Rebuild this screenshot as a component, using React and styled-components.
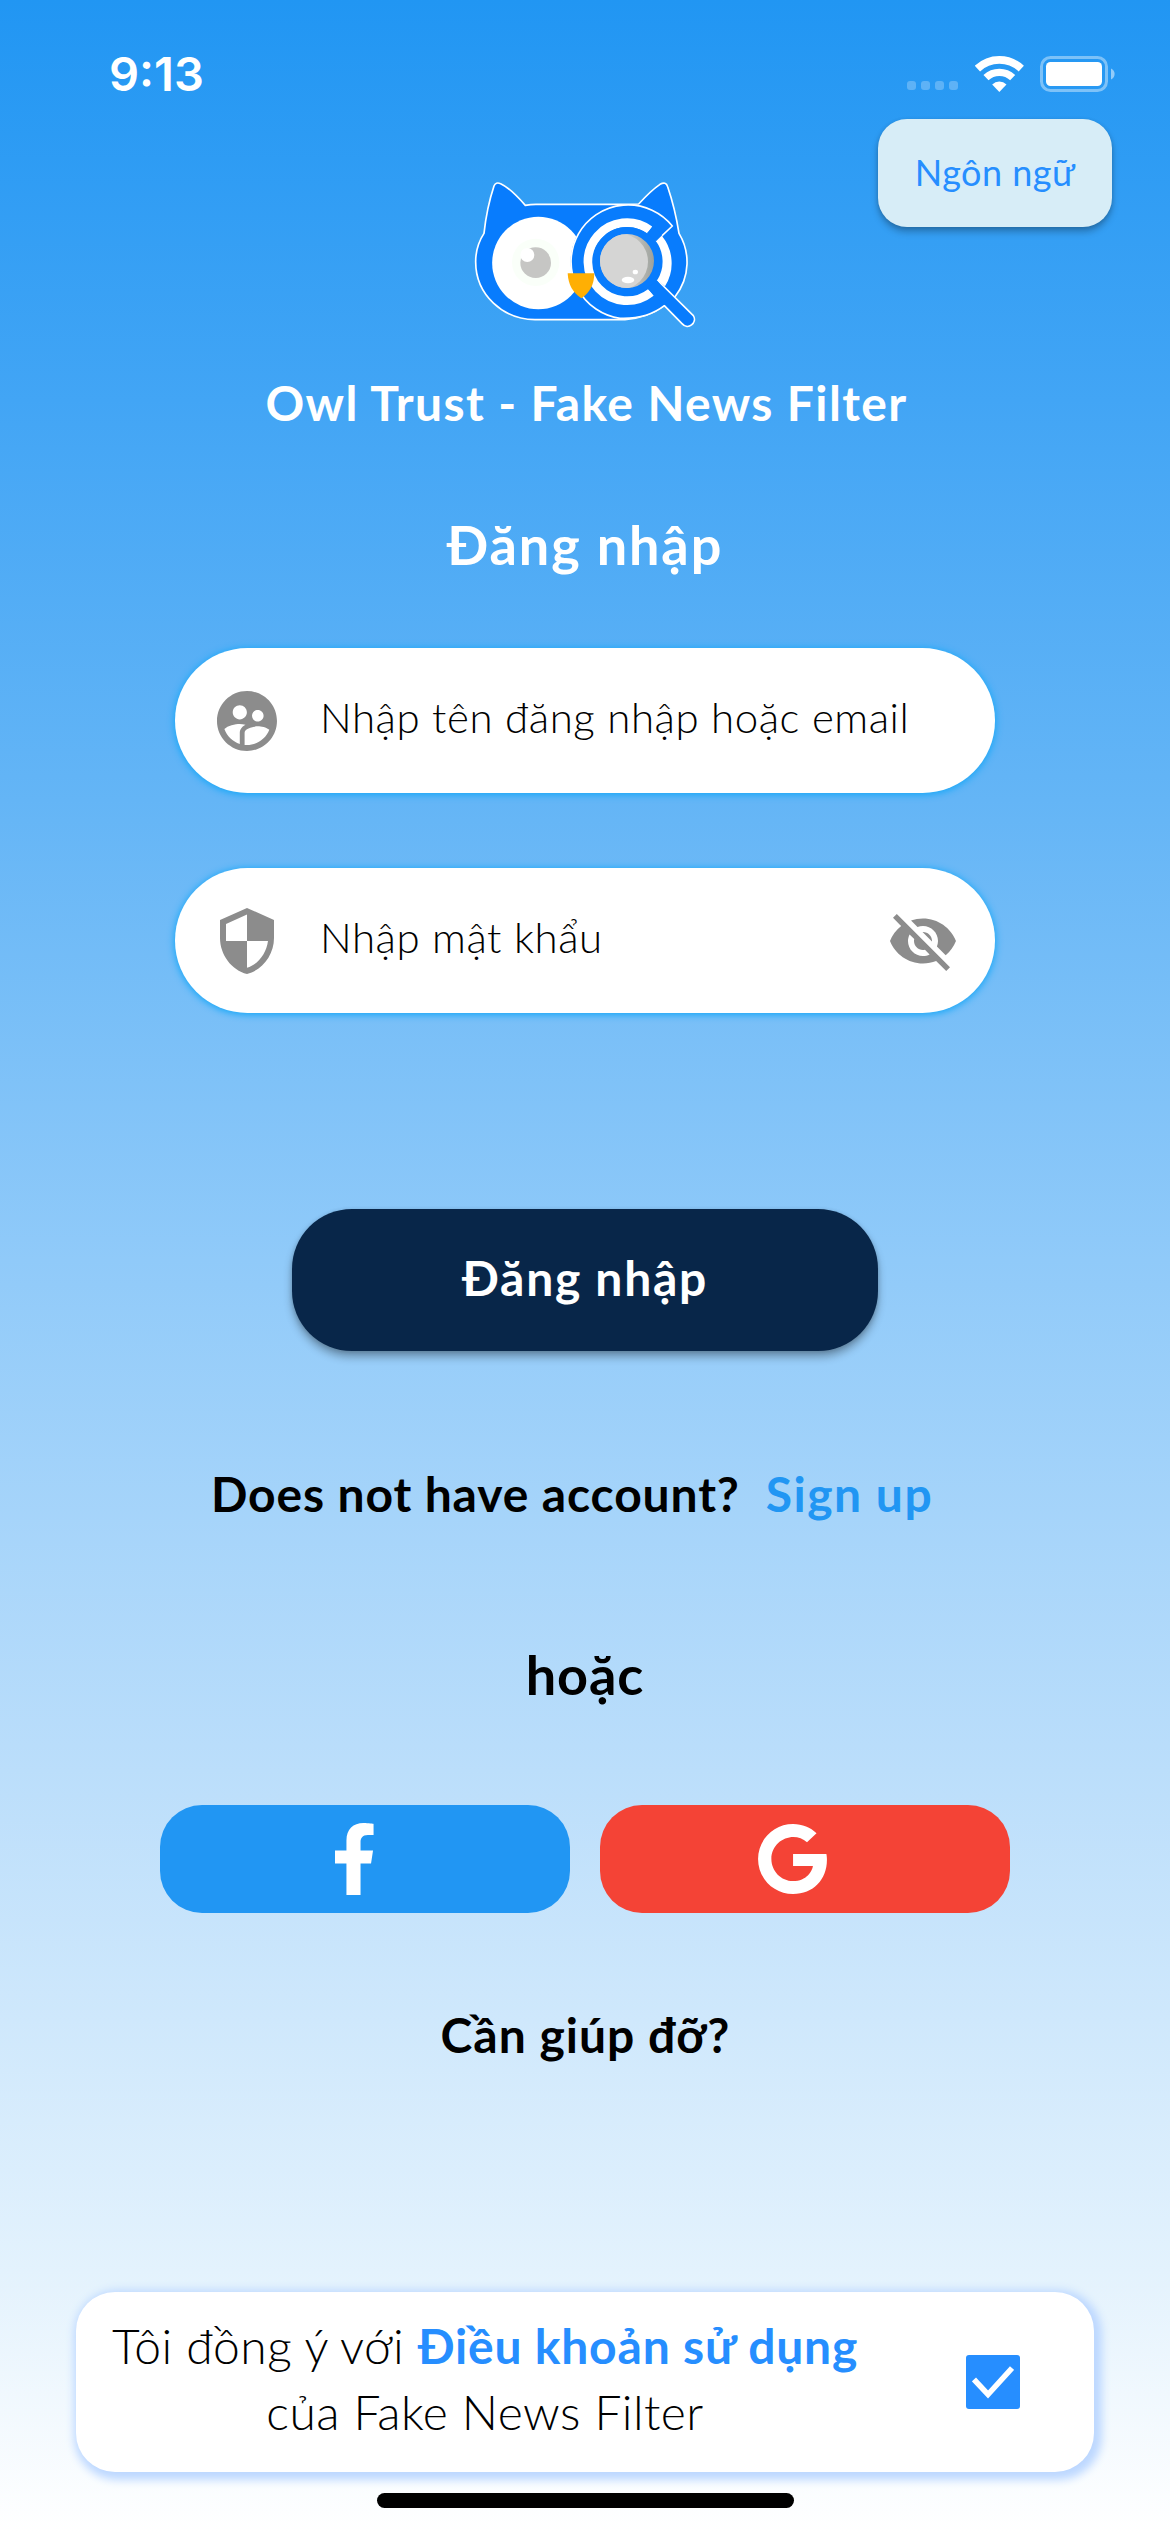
import React from "react";
import styled, { createGlobalStyle } from "styled-components";
import { MdSupervisedUserCircle, MdSecurity, MdVisibilityOff } from "react-icons/md";

const GlobalStyle = createGlobalStyle`
  * { box-sizing: border-box; }
  body { margin: 0; }
  button { border: 0; padding: 0; font: inherit; }
`;

const Screen = styled.main`
  display: flex;
  flex-direction: column;
  width: 1170px;
  height: 2532px;
  overflow: hidden;
  font-family: Lato, "Noto Sans", sans-serif;
  color: #000;
  background: linear-gradient(
    to bottom,
    #2196f3,
    #42a5f5 400px,
    #64b5f6 800px,
    #90caf9 1260px,
    #bbdefb 1770px,
    #e3f2fd 2270px,
    #fff
  );
`;

const StatusBar = styled.header`
  display: flex;
  align-items: center;
  justify-content: space-between;
  height: 119px;
  padding: 28px 54px 0 109px;
`;

const Clock = styled.time`
  font: 600 47px/60px Inter, "Liberation Sans", sans-serif;
  color: #fff;
`;

const Indicators = styled.div`
  display: flex;
  align-items: center;
`;

const SignalDots = styled.div`
  display: flex;
  gap: 5px;
  margin: 24px 17px 0 0;
`;

const Dot = styled.i`
  width: 9px;
  height: 9px;
  border-radius: 3px;
  background: rgba(255, 255, 255, 0.25);
`;

const Header = styled.section`
  display: grid;
  grid-template-columns: 1fr 250px 1fr;
  align-items: start;
  height: 254px;
`;

const LogoBox = styled.div`
  grid-column: 2;
  height: 170px;
  margin-top: 51px;
`;

const LanguageButton = styled.button`
  grid-column: 3;
  justify-self: end;
  width: 234px;
  height: 108px;
  margin-right: 58px;
  padding-bottom: 2px;
  border-radius: 29px;
  font-size: 36px;
  letter-spacing: 0.46px;
  color: #268eff;
  background: #d7edf7;
  box-shadow: 0 5px 7px rgba(0, 0, 0, 0.25), 0 1px 4px rgba(0, 0, 0, 0.12);
`;

const Title = styled.h1`
  margin: 0 0 0 3px;
  text-align: center;
  font-size: 48px;
  font-weight: 700;
  line-height: 60px;
  letter-spacing: 1.38px;
  color: #fff;
`;

const Heading = styled.h2`
  margin: 77px 0 0;
  text-align: center;
  font-size: 54px;
  font-weight: 700;
  line-height: 70px;
  letter-spacing: 1.9px;
  color: #fff;
`;

const Form = styled.div`
  display: flex;
  flex-direction: column;
  gap: 75px;
  margin: 68px 175px 0;
`;

const Field = styled.label`
  display: flex;
  align-items: center;
  height: 145px;
  padding: 0 36px;
  border-radius: 73px;
  background: #fff;
  box-shadow: 0 1px 7px 1px #18a8f8;
  color: #8c8c8c;
`;

const Placeholder = styled.span`
  flex: 1;
  padding: 0 0 7px 37px;
  font-size: 42px;
  font-weight: 300;
  letter-spacing: 0.55px;
  color: #000;
`;

const LoginButton = styled.button`
  align-self: center;
  width: 586px;
  height: 142px;
  margin-top: 196px;
  padding-bottom: 5px;
  border-radius: 60px;
  font-size: 48px;
  font-weight: 700;
  letter-spacing: 1.7px;
  color: #fff;
  background: #082649;
  box-shadow: 0 6px 8px rgba(0, 0, 0, 0.3), 0 1px 4px rgba(0, 0, 0, 0.15);
`;

const SignUpRow = styled.p`
  display: flex;
  gap: 26px;
  margin: 113px 0 0 211px;
  font-size: 48px;
  font-weight: 700;
  line-height: 60px;
  letter-spacing: 0.87px;
`;

const SignUpLink = styled.a`
  letter-spacing: 1.5px;
  color: #2196f3;
`;

const Divider = styled.p`
  margin: 116px 0 0;
  text-align: center;
  font-size: 54px;
  font-weight: 700;
  line-height: 70px;
  letter-spacing: 0.9px;
`;

const SocialRow = styled.div`
  display: grid;
  grid-template-columns: 1fr 1fr;
  gap: 30px;
  margin: 95px 160px 0;
`;

const SocialButton = styled.button`
  display: flex;
  align-items: center;
  justify-content: center;
  height: 108px;
  padding-right: ${(p) => p.$nudge || 0}px;
  border-radius: 42px;
  color: #fff;
  background: ${(p) => p.$color};
`;

const HelpLink = styled.p`
  margin: 92px 0 0 1px;
  text-align: center;
  font-size: 48px;
  font-weight: 700;
  line-height: 60px;
  letter-spacing: 1px;
`;

const TermsCard = styled.section`
  display: flex;
  align-items: center;
  height: 180px;
  margin: 227px 76px 0;
  padding: 0 74px 0 34px;
  border-radius: 39px;
  background: #fff;
  box-shadow: 3px 3px 8px 5px #bdd8ff;
`;

const TermsText = styled.p`
  width: 750px;
  margin: 0;
  padding-bottom: 6px;
  text-align: center;
  white-space: nowrap;
  font-size: 48px;
  font-weight: 300;
  line-height: 66px;
  letter-spacing: 0.45px;
`;

const TermsLink = styled.a`
  font-weight: 700;
  letter-spacing: 0.8px;
  color: #268eff;
`;

const Checkbox = styled.span`
  display: grid;
  place-items: center;
  width: 54px;
  height: 54px;
  margin-left: auto;
  border-radius: 3px;
  background: #268eff;
`;

const HomeBar = styled.div`
  align-self: center;
  width: 417px;
  height: 15px;
  margin-top: 21px;
  border-radius: 8px;
  background: #000;
`;

const WifiIcon = () => (
  <svg width="49" height="36" viewBox="344 105 147 108" fill="none" stroke="#fff">
    <path d="M351.2 142.8A95.5 95.5 0 0 1 482.8 142.8" strokeWidth="23" />
    <path d="M377 170A58 58 0 0 1 457 170" strokeWidth="22" />
    <path d="M417 213L395.5 190.5A31 31 0 0 1 438.5 190.5Z" fill="#fff" stroke="none" />
  </svg>
);

const BatteryIcon = () => (
  <svg width="76" height="36" viewBox="0 0 76 36">
    <rect x="1.5" y="1.5" width="65" height="33" rx="9" fill="none" stroke="#fff" strokeOpacity=".4" strokeWidth="3" />
    <rect x="6" y="6" width="56" height="24" rx="4.5" fill="#fff" />
    <path d="M71 12.5A6 6 0 0 1 71 23.5Z" fill="#fff" fillOpacity=".5" />
  </svg>
);

const IconGap = styled.span`
  width: 16px;
`;

const OwlLogo = () => (
  <svg width="250" height="170" viewBox="0 0 750 510">
    <defs>
      <linearGradient id="lens" x1="0" y1="0" x2="1" y2="0">
        <stop offset=".5" stopColor="#d0d0ce" />
        <stop offset="1" stopColor="#9da19c" />
      </linearGradient>
      <clipPath id="lensClip">
        <circle cx="501" cy="273" r="81" />
      </clipPath>
    </defs>
    <path
      d="M72 190C78 135 88 90 102 48Q107 35 122 41C144 51 168 74 196 106Q212 103 228 103H460L536 102C556 80 578 58 600 43Q618 33 623 50C640 100 650 145 657 190C690 245 692 320 645 380L613 407Q560 445 495 449H225C130 448 47 375 47 275Q47 228 72 190Z"
      fill="#087cfd"
      stroke="#fff"
      strokeWidth="5"
      strokeLinejoin="round"
    />
    <circle cx="235" cy="279" r="138.5" fill="#fff" />
    <circle cx="227" cy="277" r="71" fill="#fafff9" />
    <circle cx="227" cy="278" r="46" fill="#c6c6c4" />
    <circle cx="202" cy="255" r="21" fill="#fff" />
    <circle cx="502" cy="274" r="170" fill="#087cfd" />
    <path
      d="M588 214L637 168A171 171 0 1 0 480 445Q560 448 613 407L666 461C684 482 713 458 700 437L592 330"
      fill="#087cfd"
      stroke="#fff"
      strokeWidth="5"
      strokeLinejoin="round"
    />
    <path d="M569 180A117 117 0 1 0 573 367" fill="none" stroke="#fff" strokeWidth="26" />
    <path d="M588 214L606 198A130 130 0 0 1 615 349L592 330A104 104 0 0 0 588 214Z" fill="#fff" />
    <path d="M561 189L582 168L606 196L588 214Z" fill="#087cfd" />
    <path d="M561 355L582 375L613 405L630 385L592 332Z" fill="#087cfd" />
    <circle cx="501" cy="273" r="91" fill="none" stroke="#087cfd" strokeWidth="22" />
    <circle cx="501" cy="273" r="81" fill="url(#lens)" />
    <circle cx="481" cy="275" r="83" fill="#d5d5d4" clipPath="url(#lensClip)" />
    <ellipse cx="504" cy="330" rx="19" ry="10" fill="#fff" />
    <ellipse cx="526" cy="306" rx="8" ry="7" fill="#fff" />
    <path d="M323 310H403C402 345 390 367 364 385C338 367 325 345 323 310Z" fill="#ffaf04" />
  </svg>
);

const FacebookIcon = () => (
  <svg width="40" height="72" viewBox="22 0 272 512" fill="currentColor">
    <path d="M279.14 288l14.22-92.66h-88.91v-60.13c0-25.35 12.42-50.06 52.24-50.06h40.42V6.26S260.43 0 225.36 0c-73.22 0-121.08 44.38-121.08 124.72v70.62H22.89V288h81.39v224h100.17V288z" />
  </svg>
);

const GoogleIcon = () => (
  <svg width="69" height="70" viewBox="0 8 488 496" fill="currentColor">
    <path d="M488 261.8C488 403.3 391.1 504 248 504 110.8 504 0 393.2 0 256S110.8 8 248 8c66.8 0 123 24.5 166.3 64.9l-67.5 64.9C258.5 52.6 94.3 116.6 94.3 256c0 86.5 69.1 156.6 153.7 156.6 98.2 0 135-70.4 140.8-106.9H248v-85.3h236.1c2.3 12.7 3.9 24.9 3.9 41.4z" />
  </svg>
);

const CheckIcon = () => (
  <svg width="42" height="34" viewBox="0 0 42 34" fill="none" stroke="#fff" strokeWidth="5.5">
    <path d="M2 14.5L16 29.5L40 3" />
  </svg>
);

export default function App() {
  return (
    <>
      <GlobalStyle />
      <Screen>
        <StatusBar>
          <Clock>9:13</Clock>
          <Indicators>
            <SignalDots>
              <Dot />
              <Dot />
              <Dot />
              <Dot />
            </SignalDots>
            <WifiIcon />
            <IconGap />
            <BatteryIcon />
          </Indicators>
        </StatusBar>
        <Header>
          <LogoBox>
            <OwlLogo />
          </LogoBox>
          <LanguageButton>Ngôn ngữ</LanguageButton>
        </Header>
        <Title>Owl Trust - Fake News Filter</Title>
        <Heading>Đăng nhập</Heading>
        <Form>
          <Field>
            <MdSupervisedUserCircle size={72} />
            <Placeholder>Nhập tên đăng nhập hoặc email</Placeholder>
          </Field>
          <Field>
            <MdSecurity size={72} />
            <Placeholder>Nhập mật khẩu</Placeholder>
            <MdVisibilityOff size={72} />
          </Field>
        </Form>
        <LoginButton>Đăng nhập</LoginButton>
        <SignUpRow>
          <span>Does not have account?</span>
          <SignUpLink>Sign up</SignUpLink>
        </SignUpRow>
        <Divider>hoặc</Divider>
        <SocialRow>
          <SocialButton $color="#2196f3" $nudge={22}>
            <FacebookIcon />
          </SocialButton>
          <SocialButton $color="#f44336" $nudge={25}>
            <GoogleIcon />
          </SocialButton>
        </SocialRow>
        <HelpLink>Cần giúp đỡ?</HelpLink>
        <TermsCard>
          <TermsText>
            Tôi đồng ý với <TermsLink>Điều khoản sử dụng</TermsLink>
            <br />
            của Fake News Filter
          </TermsText>
          <Checkbox>
            <CheckIcon />
          </Checkbox>
        </TermsCard>
        <HomeBar />
      </Screen>
    </>
  );
}
